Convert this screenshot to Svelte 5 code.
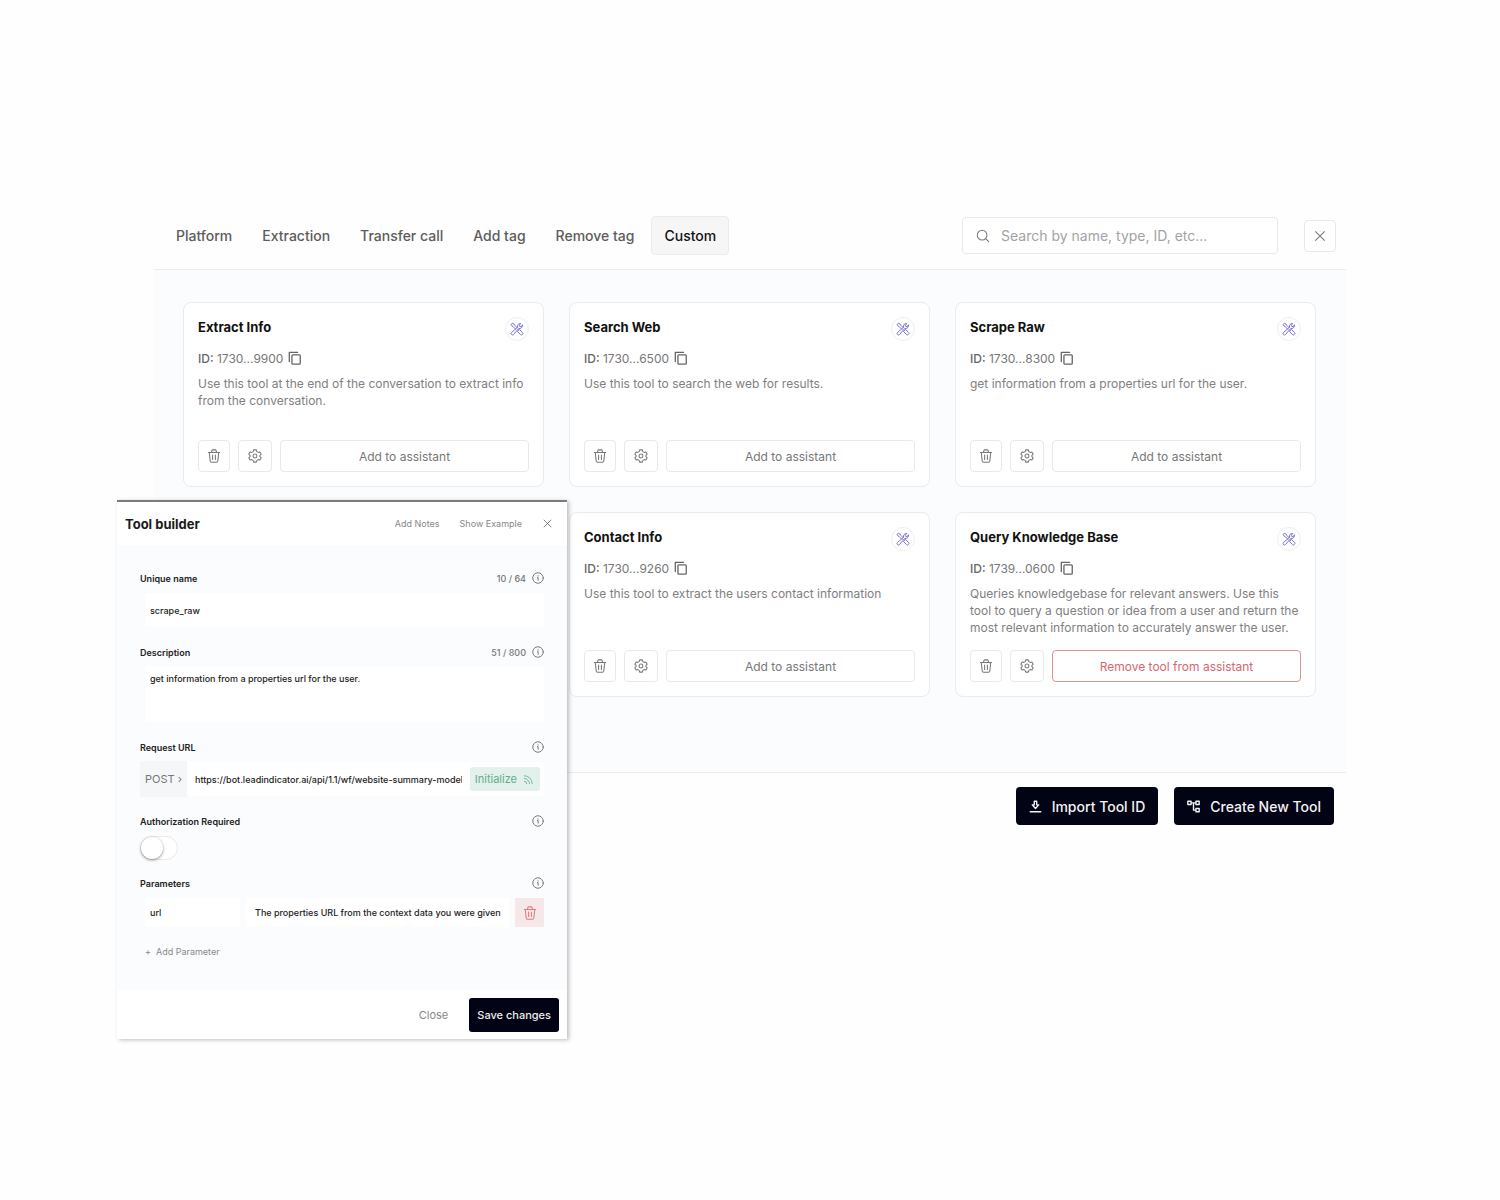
<script lang="ts">
  const tabs = ['Platform', 'Extraction', 'Transfer call', 'Add tag', 'Remove tag', 'Custom'];

  const tools = [
    {
      name: 'Extract Info',
      id: '1730...9900',
      description: 'Use this tool at the end of the conversation to extract info from the conversation.',
      added: false,
      column: 1
    },
    {
      name: 'Search Web',
      id: '1730...6500',
      description: 'Use this tool to search the web for results.',
      added: false,
      column: 2
    },
    {
      name: 'Scrape Raw',
      id: '1730...8300',
      description: 'get information from a properties url for the user.',
      added: false,
      column: 3
    },
    {
      name: 'Contact Info',
      id: '1730...9260',
      description: 'Use this tool to extract the users contact information',
      added: false,
      column: 2
    },
    {
      name: 'Query Knowledge Base',
      id: '1739...0600',
      description:
        'Queries knowledgebase for relevant answers. Use this tool to query a question or idea from a user and return the most relevant information to accurately answer the user.',
      added: true,
      column: 3
    }
  ];

  let activeTab = $state('Custom');
  let search = $state('');
  let uniqueName = $state('scrape_raw');
  let description = $state('get information from a properties url for the user.');
  let requestUrl = $state('https://bot.leadindicator.ai/api/1.1/wf/website-summary-model');
  let authRequired = $state(false);
  let paramName = $state('url');
  let paramDescription = $state('The properties URL from the context data you were given');
</script>

{#snippet trashIcon()}
  <svg class="icon" viewBox="0 0 16 16">
    <path d="M1.500 4h13M5 4l.6-2.200q.2-.8 1-.8h2.800q.8 0 1 .8L11 4M2.600 4l1 9.500q.2 1.700 1.700 1.700h5.400q1.500 0 1.700-1.700l1-9.500M6.400 7v5M9.600 7v5" />
  </svg>
{/snippet}

{#snippet closeIcon()}
  <svg class="icon" viewBox="0 0 16 16"><path d="M3 3l10 10M13 3L3 13" /></svg>
{/snippet}

{#snippet infoIcon()}
  <svg class="info" viewBox="0 0 16 16">
    <circle cx="8" cy="8" r="7" />
    <path d="M7.200 7.500h1v3.500M8 5v.5" />
  </svg>
{/snippet}

<main class="page">
  <section class="library">
    <header class="toolbar">
      <nav class="tabs">
        {#each tabs as tab}
          <button type="button" class="tab" class:active={tab === activeTab} onclick={() => (activeTab = tab)}>
            {tab}
          </button>
        {/each}
      </nav>
      <label class="search">
        <svg class="search-icon" viewBox="0 0 16 16">
          <circle cx="7" cy="7" r="5.500" />
          <path d="M11 11l3.500 3.500" />
        </svg>
        <input type="text" aria-label="Search" placeholder="Search by name, type, ID, etc..." bind:value={search} />
      </label>
      <button type="button" class="square" aria-label="Close">{@render closeIcon()}</button>
    </header>

    <div class="grid">
      {#each tools as tool}
        <article class="card" style="grid-column: {tool.column}">
          <div class="card-head">
            <h2>{tool.name}</h2>
            <span class="badge">
              <svg viewBox="0 0 24 24">
                <path d="M10 12.500L5.500 8 3.500 7 2 4l2-2 3 1.500 1 2 4.500 4.500M14.500 14l2-1 5 5a2 2 0 0 1 0 3l-.5.500a2 2 0 0 1-3 0l-5-5 1.500-2.500" />
                <path d="M21.500 5.500a5 5 0 0 1-6.500 5.500L6 21.500a2.300 2.300 0 0 1-3.500-3.500L13 9a5 5 0 0 1 5.500-6.500L16 5.500l.5 2 2 .5z" />
              </svg>
            </span>
          </div>
          <div class="tool-id">
            <span><b>ID:</b> {tool.id}</span>
            <button type="button" class="copy" aria-label="Copy ID">
              <svg viewBox="0 0 16 16">
                <path d="M1.500 12V1.500h9.500" />
                <rect x="4.500" y="4.500" width="9.500" height="10.500" rx="1" />
              </svg>
            </button>
          </div>
          <p>{tool.description}</p>
          <div class="card-actions">
            <button type="button" class="square" aria-label="Delete">{@render trashIcon()}</button>
            <button type="button" class="square wide" aria-label="Settings">
              <svg class="icon" viewBox="0 0 16 16">
                <path d="M6.500 1h3l.6 2 1.500.9 2-.5 1.500 2.500L13.600 7.300v1.400l1.500 1.400-1.500 2.500-2-.5-1.500.9-.6 2h-3l-.6-2-1.500-.9-2 .5L.9 10.100l1.500-1.400V7.300L.9 5.900l1.500-2.500 2 .5L5.900 3z" />
                <circle cx="8" cy="8" r="2.200" />
              </svg>
            </button>
            <button type="button" class="assign" class:remove={tool.added}>
              {tool.added ? 'Remove tool from assistant' : 'Add to assistant'}
            </button>
          </div>
        </article>
      {/each}
    </div>

    <footer class="library-footer">
      <button type="button" class="primary">
        <svg viewBox="0 0 16 16">
          <path d="M6.500 1.500h3v4.500H12L8 10.500 4 6h2.500zM1.500 14.500h13" />
        </svg>
        Import Tool ID
      </button>
      <button type="button" class="primary">
        <svg viewBox="0 0 16 16">
          <path d="M1 1.500h4v4H1zM11 1.500h4v4h-4zM11 10.500h4v4h-4zM5 3.500h6M8 3.500v9h3" />
        </svg>
        Create New Tool
      </button>
    </footer>
  </section>

  <form class="builder">
    <header class="builder-head">
      <h1>Tool builder</h1>
      <button type="button" class="text-button">Add Notes</button>
      <button type="button" class="text-button">Show Example</button>
      <button type="button" class="builder-close" aria-label="Close">{@render closeIcon()}</button>
    </header>

    <div class="builder-body">
      <div class="field">
        <div class="field-head">
          <label for="unique-name">Unique name</label>
          <span>10 / 64</span>
          {@render infoIcon()}
        </div>
        <input id="unique-name" class="box" type="text" bind:value={uniqueName} />
      </div>

      <div class="field">
        <div class="field-head">
          <label for="description">Description</label>
          <span>51 / 800</span>
          {@render infoIcon()}
        </div>
        <textarea id="description" class="box" bind:value={description}></textarea>
      </div>

      <div class="field">
        <div class="field-head">
          <label for="request-url">Request URL</label>
          {@render infoIcon()}
        </div>
        <div class="url-row">
          <button type="button" class="method">POST <span>›</span></button>
          <input id="request-url" type="text" bind:value={requestUrl} />
          <button type="button" class="initialize">
            Initialize
            <svg viewBox="0 0 16 16">
              <path d="M2 2.500A11.500 11.500 0 0 1 13.500 14M2 6.500A7.500 7.500 0 0 1 9.500 14M2 10.500A3.500 3.500 0 0 1 5.500 14" />
            </svg>
          </button>
        </div>
      </div>

      <div class="field compact">
        <div class="field-head">
          <label for="auth">Authorization Required</label>
          {@render infoIcon()}
        </div>
        <input id="auth" class="switch" type="checkbox" bind:checked={authRequired} />
      </div>

      <div class="field">
        <div class="field-head">
          <label for="param-name">Parameters</label>
          {@render infoIcon()}
        </div>
        <div class="param-row">
          <input id="param-name" class="param-name" type="text" bind:value={paramName} />
          <input class="param-text" type="text" aria-label="Parameter description" bind:value={paramDescription} />
          <button type="button" class="param-delete" aria-label="Delete parameter">{@render trashIcon()}</button>
        </div>
      </div>

      <button type="button" class="text-button add-param"><span>+</span>Add Parameter</button>
    </div>

    <footer class="builder-footer">
      <button type="button" class="cancel">Close</button>
      <button type="button" class="save">Save changes</button>
    </footer>
  </form>
</main>

<style>
  :global(body) {
    background: #fefefe;
    font-family: Inter, 'Liberation Sans', sans-serif;
  }

  button,
  input,
  textarea {
    box-sizing: border-box;
    margin: 0;
    padding: 0;
    border: none;
    background: none;
    color: inherit;
    font: inherit;
  }

  button {
    cursor: pointer;
  }

  svg {
    flex: none;
    fill: none;
    stroke: currentColor;
    stroke-linecap: round;
    stroke-linejoin: round;
  }

  h1,
  h2,
  p {
    margin: 0;
  }

  .page {
    position: relative;
    box-sizing: border-box;
    min-height: 100vh;
    padding: 202px 154px 160px;
  }

  .toolbar {
    display: flex;
    align-items: center;
    height: 67px;
    padding: 0 10px 0 9px;
    border-bottom: 1px solid #eceff0;
  }

  .tabs {
    display: flex;
    gap: 4px;
    flex: 1;
  }

  .tab {
    height: 39px;
    padding: 0 12px;
    border: 1px solid transparent;
    border-radius: 4px;
    color: #5c5c5c;
    font-size: 14px;
    font-weight: 500;
  }

  .tab.active {
    border-color: #ebebeb;
    background: #f6f6f6;
    color: #111;
  }

  .search {
    display: flex;
    align-items: center;
    gap: 11px;
    box-sizing: border-box;
    width: 316px;
    height: 37px;
    margin-right: 26px;
    padding: 0 13px;
    border: 1px solid #e8e8e8;
    border-radius: 4px;
    background: #fff;
  }

  .search-icon {
    width: 14px;
    height: 14px;
    color: #777;
    stroke-width: 1.2;
  }

  .search input {
    flex: 1;
    min-width: 0;
    outline: none;
    font-size: 14px;
  }

  .search input::placeholder {
    color: #a3a3a3;
  }

  .square {
    display: flex;
    align-items: center;
    justify-content: center;
    width: 32px;
    height: 32px;
    border: 1px solid #e9e9ea;
    border-radius: 4px;
    background: #fff;
    color: #777;
  }

  .square.wide {
    width: 34px;
  }

  .icon {
    width: 14px;
    height: 14px;
    stroke-width: 1.2;
  }

  .grid {
    display: grid;
    grid-template-columns: repeat(3, minmax(0, 1fr));
    gap: 25px;
    padding: 32px 30px 75px 29px;
    border-bottom: 1px solid #e9ebec;
    background: #fafcfd;
  }

  .card {
    display: flex;
    flex-direction: column;
    box-sizing: border-box;
    min-height: 185px;
    padding: 14px;
    border: 1px solid #e9ebec;
    border-radius: 8px;
    background: #fff;
  }

  .card-head {
    display: flex;
    justify-content: space-between;
    height: 32px;
  }

  h2 {
    color: #111;
    font-size: 13px;
    font-weight: 700;
    line-height: 20px;
  }

  .badge {
    display: flex;
    align-items: center;
    justify-content: center;
    box-sizing: border-box;
    width: 24px;
    height: 24px;
    border: 1px solid #eeeef2;
    border-radius: 50%;
    color: #756fd0;
  }

  .badge svg {
    width: 14px;
    height: 14px;
    stroke-width: 1.7;
  }

  .tool-id {
    display: flex;
    align-items: center;
    gap: 5px;
    height: 18px;
    margin-bottom: 8px;
    color: #777;
    font-size: 12px;
  }

  .tool-id b {
    color: #666;
    font-weight: 500;
  }

  .copy {
    display: flex;
    color: #666;
  }

  .copy svg {
    width: 14px;
    height: 14px;
    stroke-width: 1.5;
  }

  .card p {
    flex: 1;
    color: #808080;
    font-size: 12px;
    line-height: 17px;
  }

  .card-actions {
    display: flex;
    gap: 8px;
  }

  .assign {
    flex: 1;
    height: 32px;
    border: 1px solid #e9e9ea;
    border-radius: 4px;
    background: #fff;
    color: #777;
    font-size: 12px;
  }

  .assign.remove {
    border-color: #dd9295;
    color: #d7666d;
  }

  .library-footer {
    display: flex;
    justify-content: flex-end;
    gap: 16px;
    padding: 14px 12px;
  }

  .primary {
    display: flex;
    align-items: center;
    gap: 10px;
    height: 38px;
    padding: 0 13px;
    border-radius: 4px;
    background: #020314;
    color: #f2f2f5;
    font-size: 14px;
    font-weight: 500;
  }

  .primary svg {
    width: 13px;
    height: 13px;
    stroke-width: 1.7;
  }

  .builder {
    position: absolute;
    top: 500px;
    left: 117px;
    box-sizing: border-box;
    width: 450px;
    border-top: 2px solid #7b7c7e;
    background: #fff;
    box-shadow: 2px 1px 4px rgb(0 0 0 / 25%);
    color: #222;
    font-size: 10px;
  }

  .builder-head {
    display: flex;
    align-items: center;
    height: 43px;
    padding: 0 14px 0 8px;
  }

  h1 {
    flex: 1;
    color: #1b1b1b;
    font-size: 13px;
    font-weight: 700;
  }

  .text-button {
    margin-right: 20px;
    color: #888;
    font-size: 9px;
  }

  .builder-close {
    display: flex;
    color: #666;
  }

  .builder-close .icon,
  .builder-close :global(svg) {
    width: 11px;
    height: 11px;
  }

  .builder-body {
    padding: 26px 23px 33px;
    background: #fafcfd;
  }

  .field {
    margin-bottom: 18px;
  }

  .field.compact {
    margin-bottom: 16px;
  }

  .field-head {
    display: flex;
    align-items: center;
    gap: 6px;
    height: 14px;
    margin-bottom: 8px;
  }

  .field-head label {
    flex: 1;
    font-size: 9px;
    font-weight: 600;
  }

  .field-head span {
    color: #777;
    font-size: 9px;
    font-weight: 500;
  }

  .info {
    width: 12px;
    height: 12px;
    color: #777;
    stroke-width: 1.3;
  }

  .builder-body input,
  .builder-body textarea {
    font-size: 9px;
    font-weight: 500;
  }

  .box {
    display: block;
    width: 100%;
    height: 34px;
    padding: 0 10px;
    border-left: 5px solid #fafcfd;
    padding-left: 5px;
    background: #fff;
  }

  textarea.box {
    height: 55px;
    padding-top: 6px;
    resize: none;
  }

  .url-row {
    display: flex;
    align-items: center;
    height: 34px;
    background: #fff;
  }

  .url-row input {
    flex: 1;
    min-width: 0;
    padding: 0 8px;
  }

  .method {
    width: 47px;
    height: 36px;
    background: #f5f6f7;
    color: #777;
    font-size: 11px;
  }

  .initialize {
    display: flex;
    align-items: center;
    gap: 6px;
    height: 24px;
    margin-right: 4px;
    padding: 0 6px 0 5px;
    border-radius: 3px;
    background: #e2f1eb;
    color: #65ab8c;
    font-size: 11px;
  }

  .initialize svg {
    width: 11px;
    height: 11px;
    stroke-width: 1.2;
  }

  .switch {
    display: block;
    width: 38px;
    height: 24px;
    border: 1px solid #e9e9ea;
    border-radius: 12px;
    background: #fff;
    appearance: none;
  }

  .switch::before {
    display: block;
    width: 22px;
    height: 22px;
    border-radius: 50%;
    background: #fff;
    box-shadow: 0 1px 3px rgb(0 0 0 / 45%);
    content: '';
  }

  .switch:checked::before {
    margin-left: 14px;
  }

  .param-row {
    display: flex;
    align-items: center;
    gap: 6px;
    padding-left: 5px;
  }

  .param-row input {
    height: 29px;
    padding: 0 5px;
    background: #fff;
  }

  .param-name {
    width: 95px;
  }

  .param-row .param-text {
    flex: 1;
    min-width: 0;
    padding-left: 9px;
  }

  .param-delete {
    display: flex;
    align-items: center;
    justify-content: center;
    width: 29px;
    height: 29px;
    background: #f6e7e9;
    color: #df7a84;
  }

  .add-param {
    padding-left: 5px;
  }

  .add-param span {
    margin-right: 5px;
  }

  .builder-footer {
    display: flex;
    align-items: center;
    justify-content: flex-end;
    gap: 21px;
    height: 49px;
    padding-right: 8px;
  }

  .cancel {
    color: #888;
    font-size: 11px;
  }

  .save {
    height: 34px;
    padding: 0 8px;
    border-radius: 3px;
    background: #020314;
    color: #eee;
    font-size: 11px;
    font-weight: 500;
  }
</style>
